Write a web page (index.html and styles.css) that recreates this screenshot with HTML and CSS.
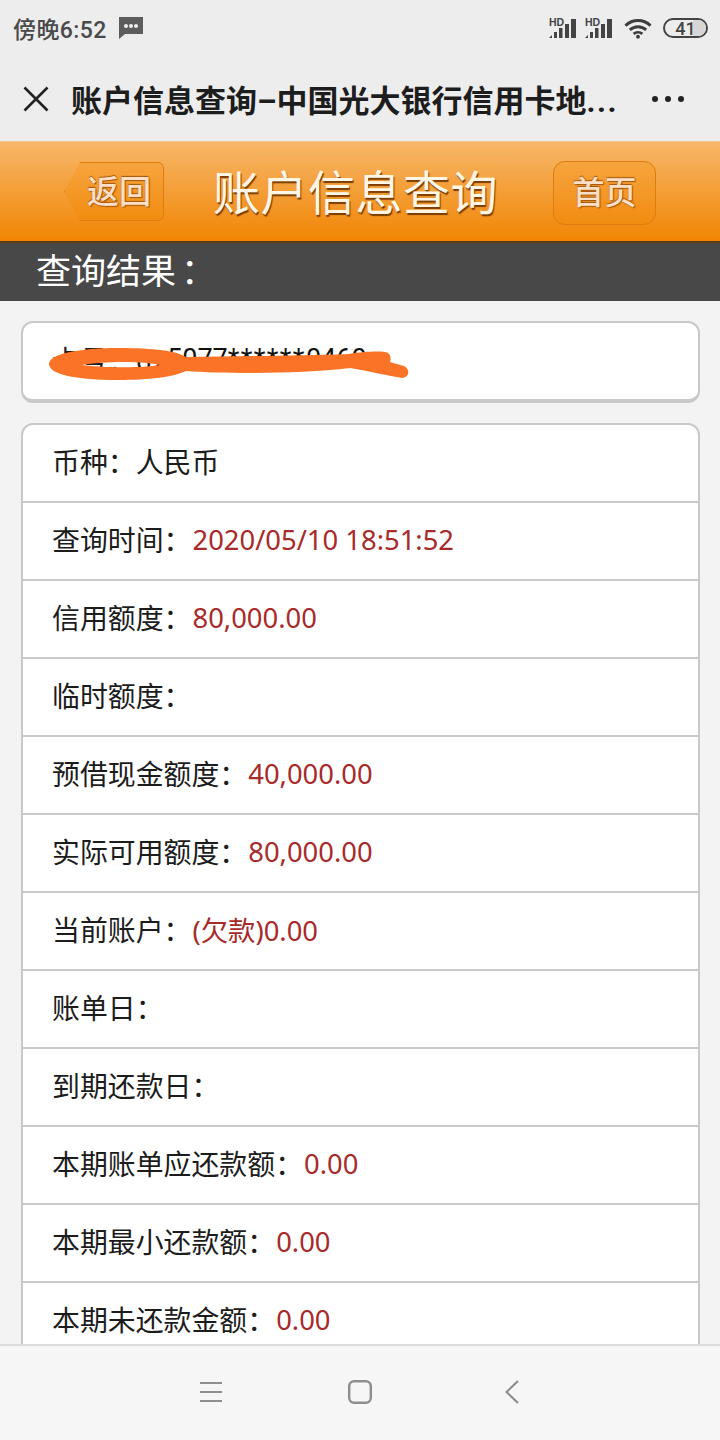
FILE: index.html
```html
<!DOCTYPE html>
<html lang="zh-CN">
<head>
<meta charset="utf-8">
<title>账户信息查询</title>
<link rel="stylesheet" href="styles.css">
</head>
<body>
<div class="screen">
  <div class="status">
    <div class="status-left">
      <span class="clock">傍晚6:52</span>
      <svg class="msg" width="24" height="22" viewBox="0 0 24 22"><path d="M0 0H24V17H6L0 22Z" fill="#5c5c5c"/><circle cx="7" cy="9" r="2" fill="#eee"/><circle cx="12" cy="9" r="2" fill="#eee"/><circle cx="17" cy="9" r="2" fill="#eee"/></svg>
    </div>
    <div class="status-right">
      <span class="signal"><b>HD</b><svg width="27" height="19" viewBox="0 0 27 19"><g fill="#444"><path d="M0 19l3-3v3z"/><path d="M5 13h3v6H5z"/><path d="M10 9h3.500v10H10z"/><path d="M16 5h4v14h-4z"/><path d="M22 0h5v19h-5z"/></g></svg></span>
      <span class="signal"><b>HD</b><svg width="27" height="19" viewBox="0 0 27 19"><g fill="#444"><path d="M0 19l3-3v3z"/><path d="M5 13h3v6H5z"/><path d="M10 9h3.500v10H10z"/><path d="M16 5h4v14h-4z"/><path d="M22 0h5v19h-5z"/></g></svg></span>
      <svg class="wifi" width="28" height="21" viewBox="0 0 29 21" fill="none" stroke="#3d3d3d" stroke-width="3"><path d="M1.500 7.500C9 .5 20 .5 27.500 7.500"/><path d="M6 12c5-4.500 12-4.500 17 0"/><path d="M10 16c2.500-2 6.500-2 9 0"/><circle cx="14.500" cy="19" r="2" fill="#3d3d3d" stroke="none"/></svg>
      <span class="battery"><span class="level"></span><span class="num">41</span></span>
    </div>
  </div>
  <div class="titlebar">
    <svg class="close" width="26" height="26" viewBox="0 0 26 26" stroke="#222" stroke-width="2.600" fill="none"><path d="M1.500 1.500L24.500 24.500M24.500 1.500L1.500 24.500"/></svg>
    <h1 class="page-title">账户信息查询–中国光大银行信用卡地<span class="more">...</span></h1>
    <div class="dots"><i></i><i></i><i></i></div>
  </div>
  <header class="banner">
    <a class="btn btn-back">返回</a>
    <div class="banner-title">账户信息查询</div>
    <a class="btn btn-home">首页</a>
  </header>
  <div class="band">查询结果<span class="colon">：</span></div>
  <main class="content">
    <section class="card card-num">
      <div class="row">卡号：62<span class="card-digits">5077<span class="stars">******</span>0460</span></div>
      <svg class="scribble" width="360" height="33" viewBox="0 0 360 33" fill="#fa7327" fill-rule="evenodd"><path d="M0 16C0 6 30 0 70 0C105 0 128 3 137 9C190 8 250 8 300 6C320 3 335 3 339 5C342 7 342 11 341 14L355 18C361 21 361 29 353 30C340 28 320 23 301 20C250 26 180 26 137 23C125 29 100 32 68 32C30 32 0 27 0 16ZM33 17C55 13 95 13 111 17C95 20 55 20 33 17Z"/></svg>
    </section>
    <section class="card">
      <div class="row">币种：人民币</div>
      <div class="row">查询时间：<span class="val">2020/05/10 18:51:52</span></div>
      <div class="row">信用额度：<span class="val">80,000.00</span></div>
      <div class="row">临时额度：</div>
      <div class="row">预借现金额度：<span class="val">40,000.00</span></div>
      <div class="row">实际可用额度：<span class="val">80,000.00</span></div>
      <div class="row">当前账户：<span class="val">(欠款)0.00</span></div>
      <div class="row">账单日：</div>
      <div class="row">到期还款日：</div>
      <div class="row">本期账单应还款额：<span class="val">0.00</span></div>
      <div class="row">本期最小还款额：<span class="val">0.00</span></div>
      <div class="row">本期未还款金额：<span class="val">0.00</span></div>
    </section>
  </main>
  <nav class="softkeys">
    <svg width="22" height="20" viewBox="0 0 22 20" stroke="#8e8e8e" stroke-width="2" fill="none"><path d="M0 1H22M0 10H22M0 19H22"/></svg>
    <svg width="24" height="24" viewBox="0 0 24 24" stroke="#8e8e8e" stroke-width="2.400" fill="none"><rect x="1.200" y="1.200" width="21.600" height="21.600" rx="5"/></svg>
    <svg class="key-back" width="14" height="24" viewBox="0 0 14 24" stroke="#8e8e8e" stroke-width="2.200" fill="none"><path d="M13 1L1.500 12L13 23"/></svg>
  </nav>
</div>
</body>
</html>
```

FILE: styles.css
```css
* { box-sizing: border-box; }
html, body { margin: 0; padding: 0; }
body { font-family: Roboto, "Noto Sans CJK SC", sans-serif; }
.screen { width: 720px; height: 1440px; display: flex; flex-direction: column; overflow: hidden; background: #f3f3f3; }

.status { height: 56px; flex: none; background: #ededed; display: flex; justify-content: space-between; align-items: center; padding: 0 12px 0 13px; }
.status-left { display: flex; align-items: center; gap: 12px; }
.clock { font-size: 23px; color: #4a4a4a; font-weight: 500; letter-spacing: .4px; }
.status-right { display: flex; align-items: center; }
.signal { position: relative; width: 27px; height: 19px; margin-right: 9px; display: block; }
.signal b { position: absolute; left: 0; top: -3px; font: 700 10.500px "Liberation Sans", sans-serif; color: #444; }
.signal svg { display: block; }
.wifi { margin-left: 3px; }
.battery { position: relative; width: 45px; height: 20px; margin-left: 11px; border: 2px solid #444; border-radius: 10px; overflow: hidden; display: flex; align-items: center; justify-content: center; }
.level { position: absolute; left: 28px; top: 0; bottom: 0; right: 0; background: #d6d6d6; }
.num { position: relative; font: 500 18px Roboto, sans-serif; color: #444; }

.titlebar { height: 85px; flex: none; background: #ededed; display: flex; align-items: center; padding: 0 0 0 23px; }
.close { flex: none; }
.page-title { flex: none; margin: 0 0 0 22px; width: 556px; font-size: 31px; font-weight: 700; color: #1d1d1d; white-space: nowrap; overflow: hidden; }
.more { letter-spacing: 1.500px; }
.dots { display: flex; gap: 7px; margin-left: 25px; }
.dots i { width: 6px; height: 6px; border-radius: 50%; background: #222; }

.banner { height: 102px; flex: none; display: flex; align-items: center; padding: 0 64px; border-top: 1px solid #f0c48d; border-bottom: 2px solid #5a3f15; background: linear-gradient(#f7b76a, #f18503); }
.btn { flex: none; display: flex; align-items: center; justify-content: center; font-size: 32px; font-weight: 500; color: #fbdfc6; text-shadow: 0 -1px 1px #a4560c, 1px 1px 1px #a4560c; border: 1px solid #dc7d10; background: linear-gradient(#f7a43f, #f18c10); }
.btn-back { width: 100px; height: 59px; padding: 0 0 6px 10px; border-radius: 6px; clip-path: polygon(16px 0, 100% 0, 100% 100%, 16px 100%, 0 50%); }
.btn-home { width: 103px; height: 64px; margin-top: 3px; padding-bottom: 6px; border-radius: 12px; }
.banner-title { flex: 1; padding: 0 6px 4px 0; text-align: center; font-size: 47px; color: #fff6e6; text-shadow: 1px 2px 1px #7a3c00; letter-spacing: .5px; }

.band { height: 58px; flex: none; background: #484848; color: #fff; font-size: 35px; line-height: 60px; padding-left: 36px; }
.colon { margin-left: 5px; }

.content { flex: 1; min-height: 0; overflow: hidden; padding: 20px 20px 0 21px; display: flex; flex-direction: column; gap: 20px; }
.card { position: relative; flex: none; background: #fff; border: 2px solid #c9c9c9; border-radius: 12px; }
.card-num { height: 82px; border-bottom-width: 4px; }
.row { height: 78px; display: flex; align-items: center; padding: 0 0 4px 29px; font-size: 27.900px; color: #1c1c1c; border-bottom: 2px solid #c9c9c9; white-space: pre; }
.card-num .row { border: 0; height: 76px; padding-bottom: 4px; }
.card-digits { font-family: Roboto, sans-serif; font-size: 27px; color: #111; }
.stars { letter-spacing: 1.400px; }
.val { margin-left: 1px; font-family: "Noto Sans", "Noto Sans CJK SC", sans-serif; font-size: 27.400px; color: #a82a2a; }
.scribble { position: absolute; left: 26px; top: 25px; }

.softkeys { height: 96px; flex: none; background: #f6f6f6; border-top: 2px solid #dcdcdc; display: flex; align-items: center; gap: 126px; padding: 0 0 2px 200px; }
.key-back { margin-left: 7px; }
```
